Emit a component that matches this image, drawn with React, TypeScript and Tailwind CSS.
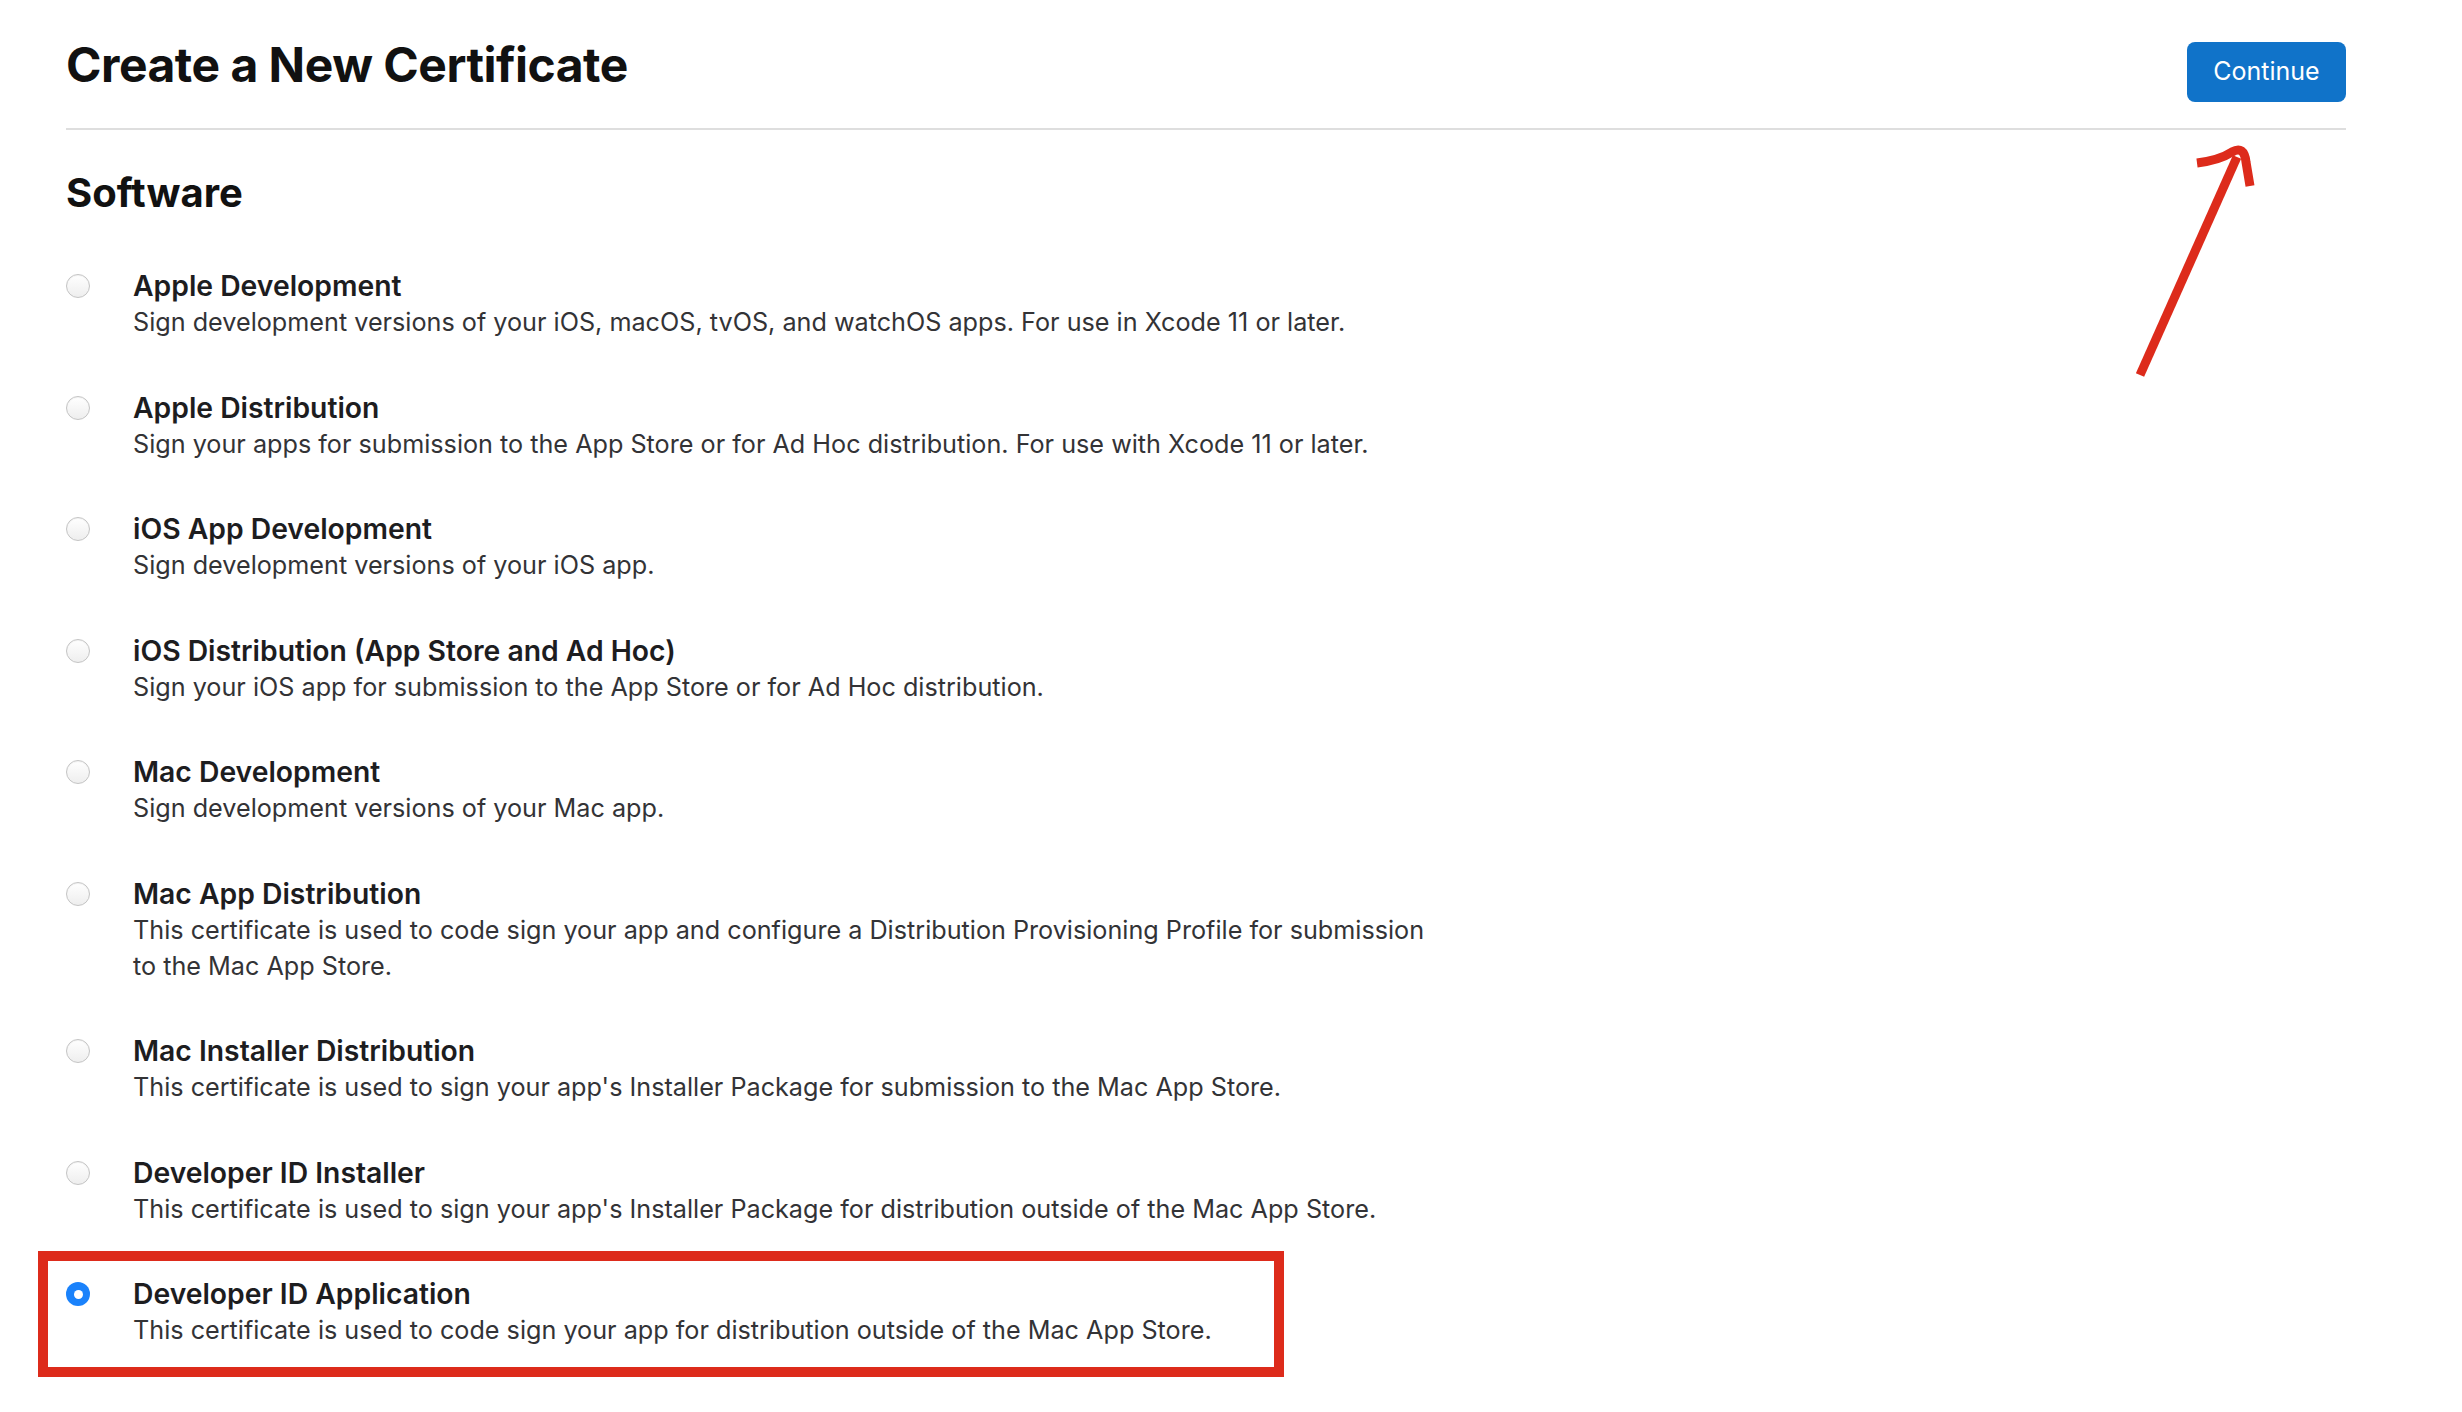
import React from "react";

type Item = { title: string; desc: React.ReactNode; selected?: boolean };

const items: Item[] = [
  {
    title: "Apple Development",
    desc: "Sign development versions of your iOS, macOS, tvOS, and watchOS apps. For use in Xcode 11 or later.",
  },
  {
    title: "Apple Distribution",
    desc: "Sign your apps for submission to the App Store or for Ad Hoc distribution. For use with Xcode 11 or later.",
  },
  { title: "iOS App Development", desc: "Sign development versions of your iOS app." },
  {
    title: "iOS Distribution (App Store and Ad Hoc)",
    desc: "Sign your iOS app for submission to the App Store or for Ad Hoc distribution.",
  },
  { title: "Mac Development", desc: "Sign development versions of your Mac app." },
  {
    title: "Mac App Distribution",
    desc: (
      <>
        This certificate is used to code sign your app and configure a Distribution Provisioning Profile for submission
        <br />
        to the Mac App Store.
      </>
    ),
  },
  {
    title: "Mac Installer Distribution",
    desc: "This certificate is used to sign your app's Installer Package for submission to the Mac App Store.",
  },
  {
    title: "Developer ID Installer",
    desc: "This certificate is used to sign your app's Installer Package for distribution outside of the Mac App Store.",
  },
  {
    title: "Developer ID Application",
    desc: "This certificate is used to code sign your app for distribution outside of the Mac App Store.",
    selected: true,
  },
];

function Radio({ selected }: { selected?: boolean }) {
  if (selected) {
    return (
      <div className="mt-[6px] flex h-[24px] w-[24px] shrink-0 items-center justify-center rounded-full bg-[#1a82fb]">
        <div className="h-[9px] w-[9px] rounded-full bg-white" />
      </div>
    );
  }
  return (
    <div className="mt-[6px] h-[24px] w-[24px] shrink-0 rounded-full border border-[#c4c4c4] bg-gradient-to-b from-white to-[#eeeeee] shadow-[inset_0_1px_1px_rgba(0,0,0,0.05)]" />
  );
}

export default function App() {
  return (
    <div
      className="relative min-h-[1412px] w-full bg-white pl-[66px] pr-[116px] text-[#1d1d1f]"
      style={{ fontFamily: "Inter, 'Noto Sans', 'Liberation Sans', sans-serif" }}
    >
      <div className="flex h-[102px] items-start justify-between pt-[36px]">
        <h1 className="text-[48px] font-bold leading-[58px] tracking-[-0.5px] text-[#111111]">
          Create a New Certificate
        </h1>
        <button className="mt-[6px] h-[60px] w-[159px] rounded-[8px] bg-[#1073c9] text-[25px] font-normal text-white">
          Continue
        </button>
      </div>
      <div className="mt-[26px] h-[2px] w-full bg-[#dedede]" />
      <h2 className="mt-[40px] text-[40px] font-bold leading-[46px] text-[#111111]">Software</h2>
      <div className="mt-[52px] flex flex-col gap-[49.5px]">
        {items.map((it) => (
          <div key={it.title} className="relative flex items-start gap-[43px]">
            <Radio selected={it.selected} />
            <div className="flex flex-col">
              <div className="text-[28.3px] font-semibold leading-[36px] text-[#1d1d1f]">{it.title}</div>
              <div className="text-[25.2px] font-normal leading-[36px] text-[#333336]">{it.desc}</div>
            </div>
            {it.selected && (
              <div className="pointer-events-none absolute left-[-28px] top-[-25px] h-[126px] w-[1246px] border-[10px] border-[#dd2b1b]" />
            )}
          </div>
        ))}
      </div>
      <svg
        className="pointer-events-none absolute left-[2120px] top-[130px]"
        width="150"
        height="260"
        viewBox="0 0 150 260"
        fill="none"
      >
        <path d="M20 245 L117 27" stroke="#dd2b1b" strokeWidth="9" strokeLinecap="butt" />
        <path
          d="M77 33 Q100 30 112 22 Q124 15 126 32 L130 56"
          stroke="#dd2b1b"
          strokeWidth="9"
          strokeLinecap="butt"
          strokeLinejoin="round"
        />
      </svg>
    </div>
  );
}
